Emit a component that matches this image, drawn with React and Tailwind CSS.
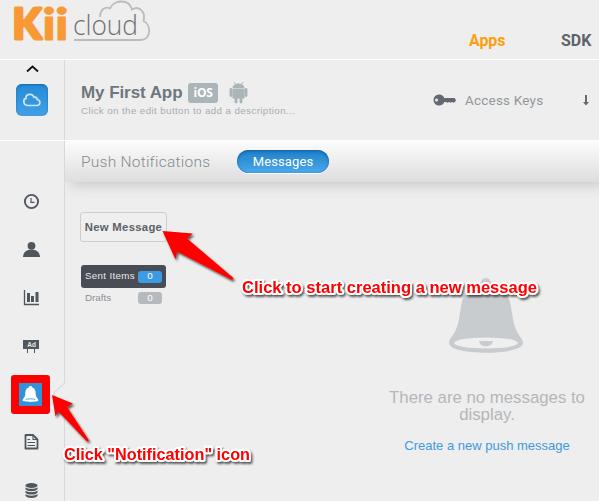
import React from "react";

function Logo() {
  return (
    <svg className="block overflow-visible" width="160" height="48" viewBox="0 0 160 48">
      <g fill="#f99935" stroke="#f99935" strokeLinejoin="round" fontFamily="Lato, sans-serif" fontWeight="900">
        <text x="12.500" y="39.200" fontSize="42" strokeWidth="3" textLength="29" lengthAdjust="spacingAndGlyphs">K</text>
        <text x="42.300" y="40" fontSize="43" strokeWidth=".9" textLength="13.500" lengthAdjust="spacingAndGlyphs">i</text>
        <text x="55.100" y="40" fontSize="43" strokeWidth=".9" textLength="13.500" lengthAdjust="spacingAndGlyphs">i</text>
      </g>
      <path d="M100 17C100 10 105 6 110 8.500C113 0 129 -2 132 9.500C139 5 146 12 143.500 21C151 24 152 39 141 40H74" fill="none" stroke="#b9bbbc" strokeWidth="1.800" />
      <text x="73" y="35.300" fill="#6f7173" fontFamily="'Open Sans', sans-serif" fontWeight="300" fontSize="27" textLength="65" lengthAdjust="spacingAndGlyphs">cloud</text>
    </svg>
  );
}

function Header() {
  return (
    <header className="flex h-[60px] shrink-0 items-start border-b border-white">
      <Logo />
      <nav className="ml-[309px] flex pt-[32px] font-['Roboto',sans-serif] text-[16px] leading-[18px] font-bold">
        <a className="w-[92px] tracking-[-.1px] text-[#ff9f0c]">Apps</a>
        <a className="text-[#5e646c]">SDK</a>
      </nav>
    </header>
  );
}

function CloudButton() {
  return (
    <div className="flex h-[32px] w-[32px] items-center justify-center rounded-[6px] bg-linear-to-b from-[#238bd6] to-[#41a0e6] shadow-[inset_0_1px_2px_#1768a8]">
      <svg width="20" height="16" viewBox="0 0 20 16" fill="none" stroke="#c9e6fa" strokeWidth="1.700">
        <path d="M6 13.500C.9 13.500 .8 7 4 6.300C3.500 1.800 10.500 .8 12 5.300C15 4.600 15.500 7.300 15.300 7.500C19 8.300 18.500 13.500 15 13.500Z" />
      </svg>
    </div>
  );
}

const bellPath = "M8 0C9 0 9.600 .6 9.700 1.300C13 2.300 12.800 6 13 8.500C13.200 11 15.500 12 15.500 13.500C15.500 15.500 .5 15.500 .5 13.500C.5 12 2.800 11 3 8.500C3.200 6 3 2.300 6.300 1.300C6.400 .6 7 0 8 0Z";

function Sidebar() {
  return (
    <aside className="flex w-[64px] shrink-0 flex-col items-start pt-[52px] text-[#50565d]">
      <svg className="ml-[22px] shrink-0" width="19" height="96" viewBox="0 0 19 96">
        <circle cx="9.500" cy="8.500" r="6.600" fill="none" stroke="currentColor" strokeWidth="1.900" />
        <path d="M9 5V9.300H12.500" fill="none" stroke="currentColor" strokeWidth="1.200" />
        <circle cx="9.500" cy="52.800" r="3.900" fill="currentColor" />
        <path d="M1 64C1.300 59 4.500 56.800 9.500 56.800S17.700 59 18 64Z" fill="currentColor" />
      </svg>
      <svg className="ml-[22px] shrink-0" width="18" height="82" viewBox="0 0 18 82">
        <path d="M2.500 1V15.500H17" fill="none" stroke="currentColor" strokeWidth="1.300" />
        <path d="M5 4H8V13H5ZM9 7H12V13H9ZM13.500 3H16.500V13H13.500Z" fill="currentColor" />
        <rect x="1" y="51" width="16" height="9" fill="currentColor" />
        <path d="M5.500 60V64M12.500 60V64" stroke="currentColor" strokeWidth="1" />
        <text x="5.300" y="58.200" fill="#e7e9ea" fontFamily="Liberation Sans, sans-serif" fontWeight="700" fontSize="6.500">Ad</text>
      </svg>
      <div className="mt-[4px] ml-[11px] flex h-[39px] w-[39px] shrink-0 items-center justify-center rounded-[3px] bg-[#ff0000]">
        <div className="flex h-[23px] w-[23px] items-center justify-center bg-[#2f94dc]">
          <svg width="17" height="17" viewBox="0 0 16 16">
            <path d={bellPath} fill="white" />
            <path d="M3.500 12.700C5 11.900 11 11.900 12.500 12.700" fill="none" stroke="#2f94dc" strokeWidth=".8" />
          </svg>
        </div>
      </div>
      <svg className="mt-[20px] ml-[22px] shrink-0" width="18" height="66" viewBox="0 0 18 66">
        <path d="M3.500 1H11L15.500 5.500V14.500H3.500Z" fill="none" stroke="currentColor" strokeWidth="1.800" strokeLinejoin="round" />
        <path d="M11 1V5.500H15M5.500 5.500H8M5.500 8.500H13M5.500 11.500H13" fill="none" stroke="currentColor" strokeWidth="1.100" />
        <g fill="currentColor">
          <ellipse cx="9.500" cy="51.500" rx="6" ry="2.500" />
          <path d="M3.500 53.200C5.500 55.400 13.500 55.400 15.500 53.200V55.200C13.500 57.800 5.500 57.800 3.500 55.200Z" />
          <path d="M3.500 56.600C5.500 58.900 13.500 58.900 15.500 56.600V58.700C13.500 61.200 5.500 61.200 3.500 58.700Z" />
          <path d="M3.500 60C5.500 62.300 13.500 62.300 15.500 60V61.800C13.500 64.700 5.500 64.700 3.500 61.800Z" />
        </g>
      </svg>
    </aside>
  );
}

function AppBar() {
  return (
    <div className="flex h-[80px] shrink-0">
      <div className="flex w-[64px] shrink-0 flex-col items-center">
        <svg className="block h-[24px] shrink-0" width="14" height="24" viewBox="0 0 14 24">
          <path d="M2 11.500L7.500 6.500L13 11.500" fill="none" stroke="#111" strokeWidth="1.800" />
        </svg>
        <CloudButton />
      </div>
      <div className="flex min-w-0 flex-1 border-l border-[#d8d8d8] pl-[16px]">
        <div className="w-[352px] shrink-0 pt-[20px]">
          <div className="flex h-[25px] items-center">
            <h1 className="w-[107px] font-['Liberation_Sans',sans-serif] text-[17px] leading-[25px] font-bold tracking-[-.07px] whitespace-nowrap text-[#6f767f]">My First App</h1>
            <span className="flex h-[20px] w-[30px] items-center justify-center rounded-[3px] bg-[#aab5b9] font-['Open_Sans',sans-serif] text-[12px] font-bold tracking-[-.3px] text-white">iOS</span>
            <svg className="ml-[11px]" width="20" height="23" viewBox="0 0 20 23" fill="#aab5b9" stroke="#aab5b9">
              <path d="M3.500 7C4 1 15 1 15.500 7ZM3.500 7.500H15.500V17.500H3.500Z" stroke="none" />
              <path d="M5 1L6.500 3.500M14 1L12.500 3.500" strokeWidth="1" />
              <path d="M2 8.500V14.500M17 8.500V14.500M7 17V21M12 17V21" strokeWidth="2.900" strokeLinecap="round" />
            </svg>
          </div>
          <p className="font-['Liberation_Sans',sans-serif] text-[9.800px] leading-[12px] tracking-[.38px] whitespace-nowrap text-[#a8acb0]">Click on the edit button to add a description...</p>
        </div>
        <div className="flex h-[80px] items-center font-['Roboto',sans-serif]">
          <svg width="24" height="14" viewBox="0 0 24 14">
            <path fillRule="evenodd" d="M6 1.500A5.500 5.500 0 0 0 6 12.500C9 12.500 10.500 11 11.200 9H13L14.500 9.800L16 9L17.500 9.800L19 9L20.500 9.800L22 9L23 7L21.500 5H11.200C10.500 3 9 1.500 6 1.500ZM3.500 5.500A1.500 1.500 0 1 1 3.500 8.500A1.500 1.500 0 1 1 3.500 5.500Z" fill="#626970" />
          </svg>
          <span className="ml-[8px] w-[117px] text-[13.500px] tracking-[.2px] whitespace-nowrap text-[#92979c]">Access Keys</span>
          <svg width="8" height="12" viewBox="0 0 8 12"><path d="M3 1H5V8H7L4 11.500L1 8H3Z" fill="#626970" /></svg>
        </div>
      </div>
    </div>
  );
}

function SectionBar() {
  return (
    <div className="flex h-[41px] shrink-0 items-center bg-linear-to-b from-[#fcfcfc] to-[#dedede] pl-[16px] font-['Roboto',sans-serif] shadow-[5px_4px_12px_#cacaca]">
      <h2 className="w-[156px] pt-[2px] text-[15.500px] font-light tracking-[.25px] whitespace-nowrap text-[#858b90]">Push Notifications</h2>
      <span className="flex h-[23px] w-[92px] items-center justify-center rounded-full bg-linear-to-b from-[#1b80c8] to-[#4aa8ec] pt-[1px] text-[13px] tracking-[.1px] text-white shadow-[inset_0_1px_3px_#135f9c,0_1px_0_#fff]">Messages</span>
    </div>
  );
}

function Folders() {
  return (
    <div className="w-[88px] shrink-0 font-['Liberation_Sans',sans-serif]">
      <button className="flex h-[30px] w-[87px] items-center justify-center rounded-[3px] border border-[#cecece] bg-[#efefef] text-[11.300px] font-bold tracking-[.3px] whitespace-nowrap text-[#5d6167]">New Message</button>
      <div className="mt-[23px] ml-px flex h-[23px] w-[85px] items-center rounded-[3px] bg-[#484c54] pl-[4px] text-[9.800px] text-[#e8e8e8]">
        <span className="w-[53px] tracking-[.3px] whitespace-nowrap">Sent Items</span>
        <span className="flex h-[12px] w-[24px] items-center justify-center rounded-[3px] bg-[#3c9be2] text-white">0</span>
      </div>
      <div className="ml-px flex h-[20px] w-[85px] items-center pl-[4px] text-[9.800px] text-[#8b9096]">
        <span className="w-[53px]">Drafts</span>
        <span className="flex h-[12px] w-[24px] items-center justify-center rounded-[3px] bg-[#b6babf] text-white">0</span>
      </div>
    </div>
  );
}

function EmptyState() {
  return (
    <div className="ml-[216px] flex w-[206px] shrink-0 flex-col items-center pt-[65px] text-center font-['Liberation_Sans',sans-serif]">
      <svg className="mr-[2px] block" width="76" height="78" viewBox="0 0 76 78">
        <path d="M38 1C41 1 43 4 43.500 6C62 8 62 26 65 42C68 59 75 60 75 66C75 79 1 79 1 66C1 60 8 59 11 42C14 26 14 8 32.500 6C33 4 35 1 38 1Z" fill="#c8cccf" />
        <ellipse cx="38" cy="66" rx="32" ry="5.500" fill="#efefef" />
        <path d="M31 64H45C44 71 32 71 31 64Z" fill="#c8cccf" />
      </svg>
      <p className="mt-[34px] text-[16.800px] leading-[17px] whitespace-nowrap text-[#b3b7ba]">There are no messages to<br />display.</p>
      <a className="mt-[15px] text-[13px] leading-[15px] whitespace-nowrap text-[#3d9adf]">Create a new push message</a>
    </div>
  );
}

function Annotations() {
  return (
    <svg className="pointer-events-none absolute inset-0" width="599" height="501" viewBox="0 0 599 501">
      <defs>
        <filter id="shade" x="-10%" y="-20%" width="120%" height="160%">
          <feDropShadow dx="1.500" dy="2" stdDeviation="1.300" floodColor="#000" floodOpacity=".65" />
        </filter>
      </defs>
      <path d="M64.500 383.500V404.500" stroke="#eee" strokeWidth="2" />
      <path d="M64.500 383L53 394L64.500 405" fill="#eee" stroke="#d2d2d2" strokeWidth="1" />
      <g fill="#ff0000" filter="url(#shade)">
        <path d="M162.500 231L193 233.500L187 238.500L233.500 278L232 280L177 251.500L175.500 259.500Z" />
        <path d="M52 395L73 403.500L67 407L89 440.500L87 441.500L58.500 411.500L55.500 416.500Z" />
      </g>
      <g fill="#ff0000" stroke="white" strokeWidth="4" strokeLinejoin="round" paintOrder="stroke" fontFamily="Liberation Sans, sans-serif" fontWeight="700" fontSize="16.500" filter="url(#shade)">
        <text x="242" y="293" textLength="295" lengthAdjust="spacingAndGlyphs">Click to start creating a new message</text>
        <text x="64" y="460" textLength="186" lengthAdjust="spacingAndGlyphs">Click "Notification" icon</text>
      </g>
    </svg>
  );
}

export default function App() {
  return (
    <div className="relative flex h-[501px] w-[599px] flex-col overflow-hidden bg-[#eeeeee]">
      <Header />
      <AppBar />
      <div className="flex min-h-0 flex-1 border-t border-white">
        <Sidebar />
        <main className="flex min-w-0 flex-1 flex-col overflow-hidden border-l border-[#d8d8d8]">
          <SectionBar />
          <div className="flex pt-[30px] pl-[15px]">
            <Folders />
            <EmptyState />
          </div>
        </main>
      </div>
      <Annotations />
    </div>
  );
}
